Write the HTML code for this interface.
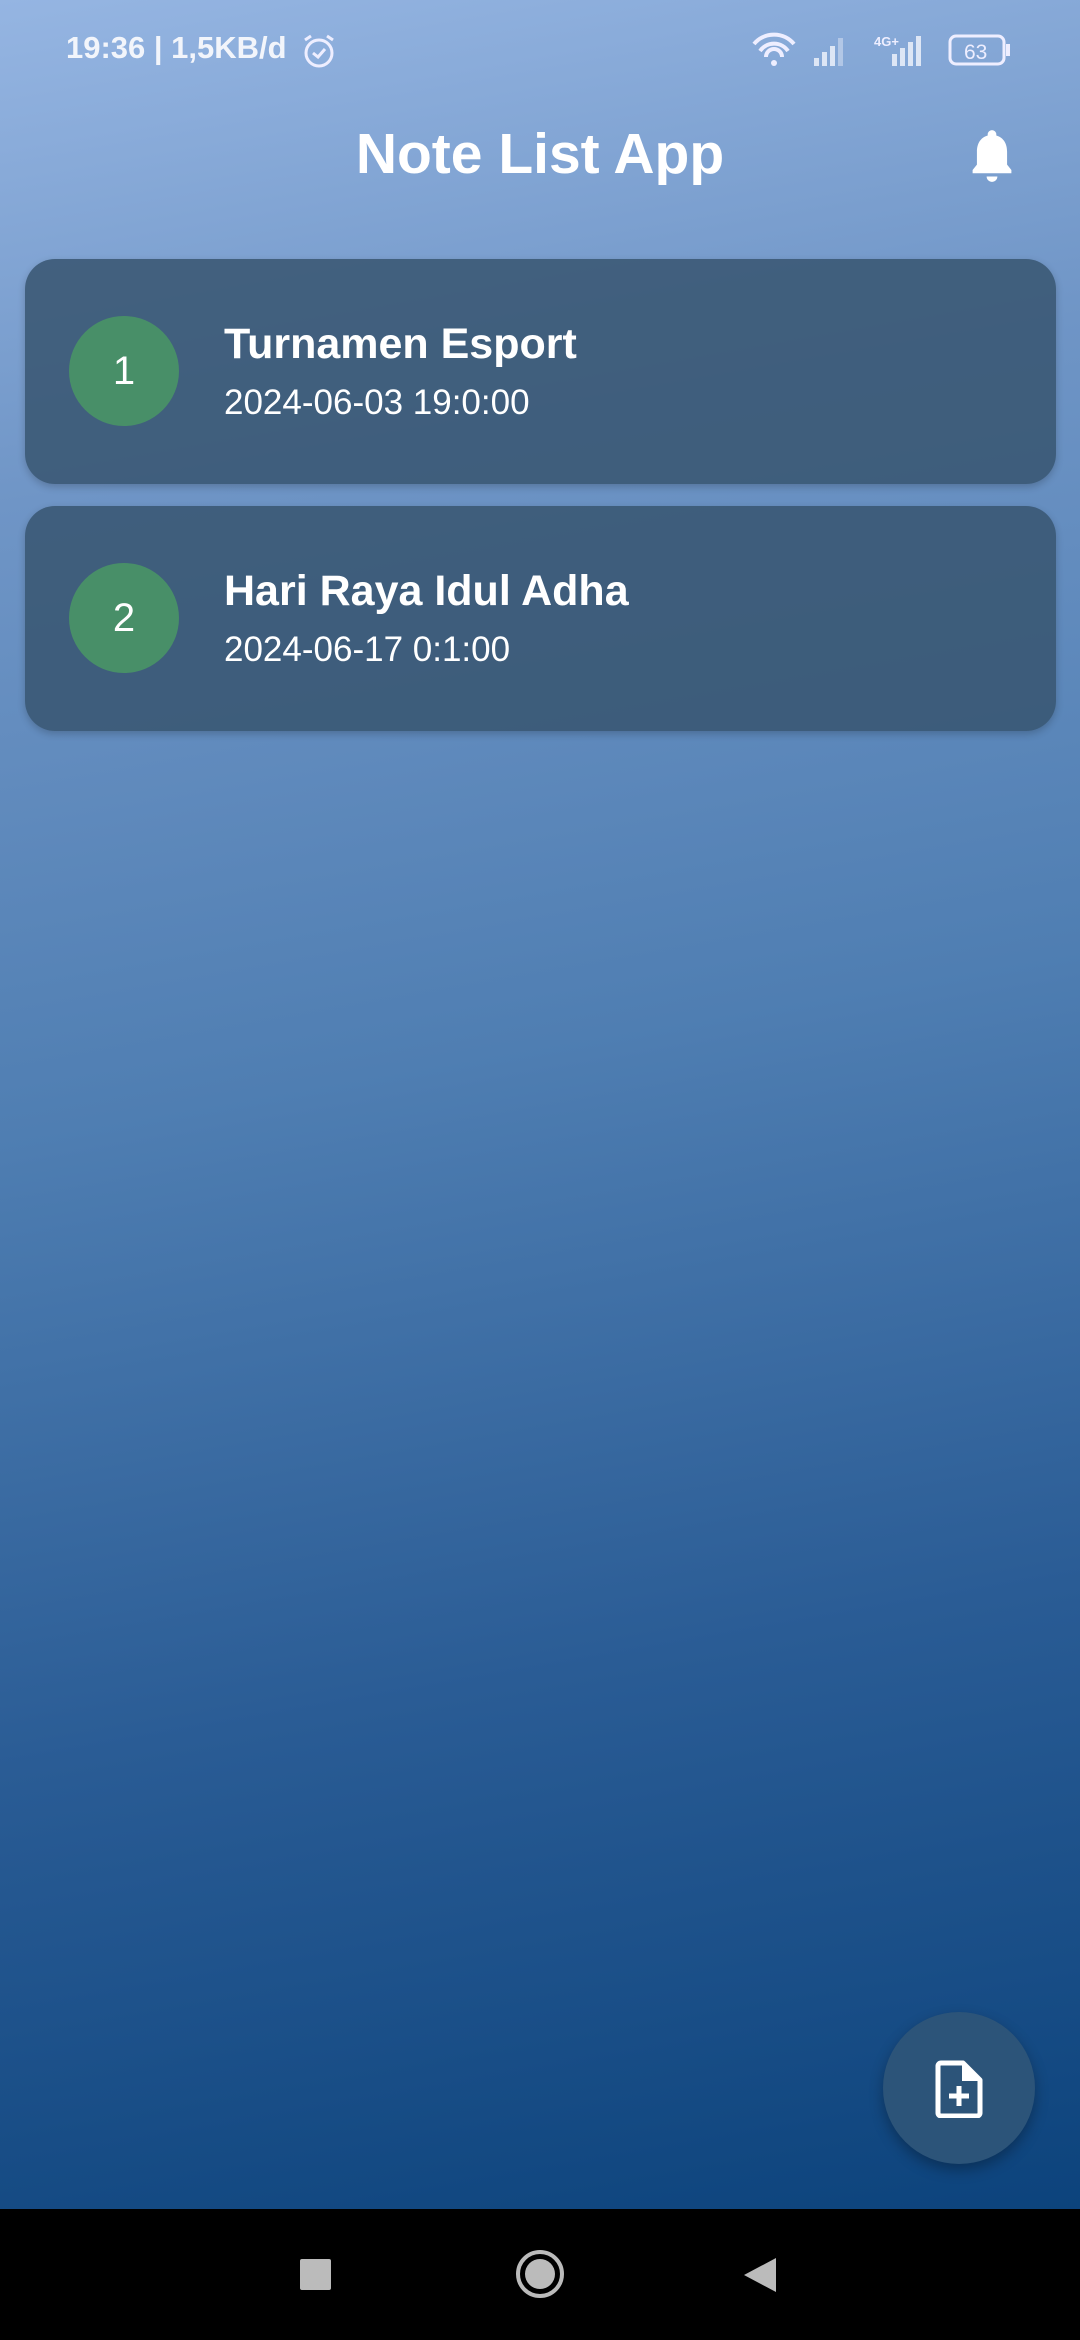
<!DOCTYPE html>
<html><head><meta charset="utf-8"><style>
*{margin:0;padding:0;box-sizing:border-box}
body{width:1080px;height:2340px;overflow:hidden;font-family:"Liberation Sans",sans-serif;color:#fff;position:relative;
background:linear-gradient(170deg,#95b5e2 0%,#6f95c6 20%,#4f7eb2 45%,#2a5c95 70%,#063e77 100%);}
.sb{position:absolute;top:30px;left:66px;font-size:31px;font-weight:bold;color:#f2f5fb}
.title{position:absolute;top:121px;width:1080px;text-align:center;font-size:57px;font-weight:bold}
.card{position:absolute;left:25px;width:1031px;height:225px;border-radius:30px;background:rgba(55,85,112,0.85);box-shadow:0 3px 8px rgba(0,0,0,0.2)}
.circ{position:absolute;left:44px;top:57px;width:110px;height:110px;border-radius:50%;background:#488f68;font-size:40px;text-align:center;line-height:110px}
.t{position:absolute;left:199px;top:61px;font-size:43px;font-weight:bold}
.d{position:absolute;left:199px;top:124px;font-size:35px}
.fab{position:absolute;left:883px;top:2012px;width:152px;height:152px;border-radius:50%;background:#2c5479;box-shadow:0 6px 14px rgba(0,0,0,0.3)}
.nav{position:absolute;left:0;top:2209px;width:1080px;height:131px;background:#000}
</style></head><body>
<div class="sb">19:36 | 1,5KB/d</div>
<svg style="position:absolute;left:300px;top:32px" width="38" height="38" viewBox="0 0 38 38"><circle cx="19" cy="21" r="13" fill="none" stroke="#eef" stroke-width="3"/><path d="M13 21l5 4 7-8" fill="none" stroke="#eef" stroke-width="3"/><path d="M5 8l6-4M33 8l-6-4" stroke="#eef" stroke-width="3"/></svg>
<svg style="position:absolute;left:752px;top:32px" width="265" height="36" viewBox="0 0 265 36"><path d="M2 12a26 26 0 0 1 40 0M8 19a17 17 0 0 1 28 0M14 25a8 8 0 0 1 16 0" fill="none" stroke="#eef" stroke-width="4"/><circle cx="22" cy="31" r="3" fill="#eef"/>
<g fill="#dde6f5"><rect x="62" y="26" width="5" height="8"/><rect x="70" y="20" width="5" height="14"/><rect x="78" y="14" width="5" height="20"/><rect x="86" y="6" width="5" height="28" opacity=".5"/>
<rect x="140" y="22" width="5" height="12"/><rect x="148" y="16" width="5" height="18"/><rect x="156" y="10" width="5" height="24"/><rect x="164" y="4" width="5" height="30"/></g>
<text x="122" y="14" font-size="13" font-weight="bold" fill="#eef" font-family="Liberation Sans">4G+</text>
<rect x="198" y="4" width="54" height="28" rx="6" fill="none" stroke="#eef" stroke-width="3"/><rect x="254" y="12" width="4" height="12" fill="#eef"/>
<text x="212" y="27" font-size="21" fill="#eef" font-family="Liberation Sans">63</text></svg>
<div class="title">Note List App</div>
<svg style="position:absolute;left:966px;top:128px" width="52" height="56" viewBox="0 0 24 26"><path d="M12 1a2 2 0 0 0-2 2v.5C6.5 4.5 5 7.5 5 11v6l-2 2.5V21h18v-1.5L19 17v-6c0-3.5-1.5-6.5-5-7.5V3a2 2 0 0 0-2-2zM9.5 22.5a2.5 2.5 0 0 0 5 0z" fill="#fff"/></svg>
<div class="card" style="top:259px"><div class="circ">1</div><div class="t">Turnamen Esport</div><div class="d">2024-06-03 19:0:00</div></div>
<div class="card" style="top:506px"><div class="circ">2</div><div class="t">Hari Raya Idul Adha</div><div class="d">2024-06-17 0:1:00</div></div>
<div class="fab"><svg style="position:absolute;left:52px;top:48px" width="48" height="58" viewBox="0 0 48 58"><path d="M6 3h22l17 17v33a3 3 0 0 1-3 3H6a3 3 0 0 1-3-3V6a3 3 0 0 1 3-3z" fill="none" stroke="#fff" stroke-width="5" stroke-linejoin="round"/><path d="M27 3v18h18" fill="#fff"/><path d="M24 26v20M14 36h20" stroke="#fff" stroke-width="5"/></svg></div>
<div class="nav">
<div style="position:absolute;left:300px;top:50px;width:31px;height:31px;background:#bbb;border-radius:2px"></div>
<div style="position:absolute;left:516px;top:41px;width:48px;height:48px;border-radius:50%;border:4px solid #bbb"><div style="position:absolute;left:5px;top:5px;width:30px;height:30px;border-radius:50%;background:#bbb"></div></div>
<svg style="position:absolute;left:742px;top:47px" width="36" height="38"><path d="M34 2v34L2 19z" fill="#bbb"/></svg>
</div>
</body></html>
